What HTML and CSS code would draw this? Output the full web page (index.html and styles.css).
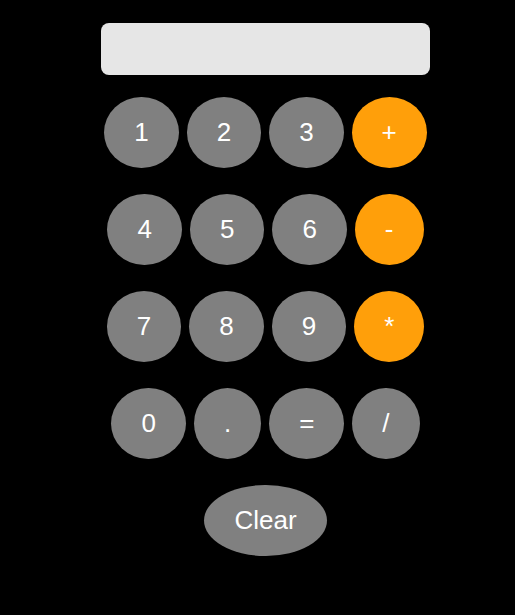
FILE: index.html
```html
<!DOCTYPE html>
<html>
<head>
<meta charset="utf-8">
<link rel="stylesheet" href="styles.css">
</head>
<body>
<div class="calc">
  <div class="display"></div>
  <div class="row">
    <button class="key">1</button><button class="key">2</button><button class="key">3</button><button class="key op">+</button>
  </div>
  <div class="row">
    <button class="key">4</button><button class="key">5</button><button class="key">6</button><button class="key op">-</button>
  </div>
  <div class="row">
    <button class="key">7</button><button class="key">8</button><button class="key">9</button><button class="key op">*</button>
  </div>
  <div class="row">
    <button class="key">0</button><button class="key">.</button><button class="key">=</button><button class="key">/</button>
  </div>
  <div class="row">
    <button class="key">Clear</button>
  </div>
</div>
</body>
</html>
```
FILE: styles.css
```css
html, body {
  margin: 0;
  background: #000;
}
body {
  font-family: "Liberation Sans", Arial, sans-serif;
}
.calc {
  padding: 23px 0 0 16px;
  display: flex;
  flex-direction: column;
  align-items: center;
  gap: 26px;
}
.display {
  width: 329px;
  height: 52px;
  background: #e6e6e6;
  border-radius: 8px;
  margin-bottom: -4px;
}
.row {
  display: flex;
  justify-content: center;
  gap: 8px;
}
.key {
  font-family: "Liberation Sans", Arial, sans-serif;
  font-size: 26px;
  line-height: 29px;
  padding: 21px 30px;
  border: none;
  border-radius: 50%;
  background: #808080;
  color: #fff;
  margin: 0;
}
.key.op {
  background: #ff9f0a;
}
```
